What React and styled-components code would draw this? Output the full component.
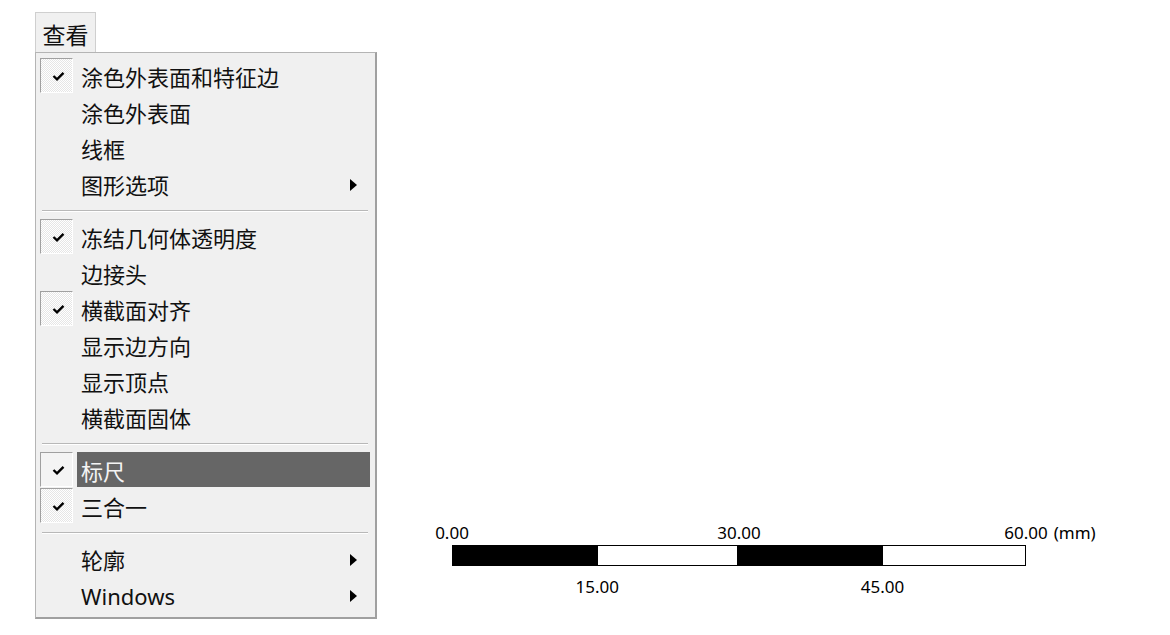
import React from "react";
import styled, { createGlobalStyle } from "styled-components";

const GlobalStyle = createGlobalStyle`
  body {
    margin: 0;
    background: #ffffff;
    font-family: "Noto Sans", "Noto Sans CJK SC", sans-serif;
  }
`;

const items = [
  { label: "涂色外表面和特征边", checked: true },
  { label: "涂色外表面" },
  { label: "线框" },
  { label: "图形选项", sub: true },
  { sep: true },
  { label: "冻结几何体透明度", checked: true },
  { label: "边接头" },
  { label: "横截面对齐", checked: true },
  { label: "显示边方向" },
  { label: "显示顶点" },
  { label: "横截面固体" },
  { sep: true },
  { label: "标尺", checked: true, active: true },
  { label: "三合一", checked: true },
  { sep: true },
  { label: "轮廓", sub: true },
  { label: "Windows", sub: true },
];

const ticksTop = [
  { at: 0, text: "0.00" },
  { at: 50, text: "30.00" },
  { at: 100, text: "60.00", unit: "(mm)" },
];
const ticksBottom = [
  { at: 25.3, text: "15.00" },
  { at: 75, text: "45.00" },
];
const segments = [
  { w: 145, dark: true },
  { w: 140 },
  { w: 146, dark: true },
  { w: 143 },
];

const CheckMark = () => (
  <svg width="13" height="10" viewBox="0 0 13 10">
    <polyline
      points="1.5,5 5,8.3 11.5,1.8"
      fill="none"
      stroke="#000"
      strokeWidth="2.4"
    />
  </svg>
);

const App = () => {
  return (
    <Page>
      <GlobalStyle />
      <MenuColumn>
        <MenuTitle>查看</MenuTitle>
        <MenuPanel>
          {items.map((it, i) =>
            it.sep ? (
              <Separator key={i} />
            ) : (
              <Row key={i}>
                <CheckBox $on={it.checked} $plain={it.active}>
                  {it.checked && <CheckMark />}
                </CheckBox>
                <Label $active={it.active}>
                  <span>{it.label}</span>
                  {it.sub && <Arrow />}
                </Label>
              </Row>
            )
          )}
        </MenuPanel>
      </MenuColumn>

      <Scale>
        <TickRow>
          {ticksTop.map((t) => (
            <Tick key={t.text} style={{ left: `${t.at}%` }}>
              {t.text}
              {t.unit && <Unit>{t.unit}</Unit>}
            </Tick>
          ))}
        </TickRow>
        <Bar>
          {segments.map((s, i) => (
            <Segment key={i} $dark={s.dark} style={{ width: s.w }} />
          ))}
        </Bar>
        <TickRow $bottom>
          {ticksBottom.map((t) => (
            <Tick key={t.text} style={{ left: `${t.at}%` }}>
              {t.text}
            </Tick>
          ))}
        </TickRow>
      </Scale>
    </Page>
  );
};

export default App;

const Page = styled.div`
  display: flex;
  align-items: flex-start;
  box-sizing: border-box;
  min-height: 635px;
  padding: 12px 0 0 35px;
`;

const MenuColumn = styled.div`
  display: flex;
  flex-direction: column;
  width: 342px;
`;

const MenuTitle = styled.div`
  box-sizing: border-box;
  width: 61px;
  height: 40px;
  display: flex;
  align-items: center;
  justify-content: center;
  padding-top: 2px;
  background: #f0f0f0;
  border: 1px solid #cfcfcf;
  border-bottom: none;
  font-family: "Noto Sans CJK SC", sans-serif;
  font-size: 23px;
  color: #111;
`;

const MenuPanel = styled.div`
  background: #f0f0f0;
  border: 1px solid #b4b4b4;
  border-right: 2px solid #a0a0a0;
  border-bottom: 2px solid #a0a0a0;
  padding: 5px 5px 4px 4px;
`;

const Row = styled.div`
  display: flex;
  height: 36px;
`;

const CheckBox = styled.div`
  box-sizing: border-box;
  width: 33px;
  height: 35px;
  display: flex;
  align-items: center;
  justify-content: center;
  padding-left: 3px;
  visibility: ${(p) => (p.$on ? "visible" : "hidden")};
  border-top: 1px solid #a0a0a0;
  border-left: 1px solid #a0a0a0;
  border-right: 1px solid #ffffff;
  border-bottom: 1px solid #ffffff;
  background: ${(p) =>
    p.$plain
      ? "#f4f4f4"
      : "repeating-conic-gradient(#ffffff 0 25%, #e6e6e6 0 50%) 0 0 / 2px 2px"};
`;

const Label = styled.div`
  flex: 1;
  box-sizing: border-box;
  height: 35px;
  margin-left: 4px;
  padding: 2px 0 0 4px;
  display: flex;
  align-items: center;
  justify-content: space-between;
  background: ${(p) => (p.$active ? "#666666" : "transparent")};
  color: ${(p) => (p.$active ? "#f4f4f4" : "#111")};
  font-size: 22px;
  line-height: 1;
`;

const Arrow = styled.span`
  width: 0;
  height: 0;
  margin-right: 13px;
  border-left: 7px solid #000;
  border-top: 6px solid transparent;
  border-bottom: 6px solid transparent;
`;

const Separator = styled.div`
  height: 17px;
  display: flex;
  align-items: center;
  padding: 0 2px;

  &::before {
    content: "";
    flex: 1;
    border-top: 1px solid #b8b8b8;
    border-bottom: 1px solid #ffffff;
  }
`;

const Scale = styled.div`
  width: 574px;
  margin: 509px 0 0 75px;
  display: flex;
  flex-direction: column;
  font-family: "Noto Sans", sans-serif;
  font-size: 17px;
  color: #000;
`;

const TickRow = styled.div`
  position: relative;
  height: 24px;
  margin-top: ${(p) => (p.$bottom ? "9px" : "0")};
`;

const Tick = styled.span`
  position: absolute;
  top: 0;
  transform: translateX(-50%);
  white-space: nowrap;
  line-height: 24px;
`;

const Unit = styled.span`
  position: absolute;
  left: 100%;
  top: 0;
  margin-left: 6px;
`;

const Bar = styled.div`
  display: flex;
  height: 21px;
  box-sizing: border-box;
  border: 1px solid #000;
`;

const Segment = styled.div`
  height: 100%;
  background: ${(p) => (p.$dark ? "#000" : "#fff")};
`;
